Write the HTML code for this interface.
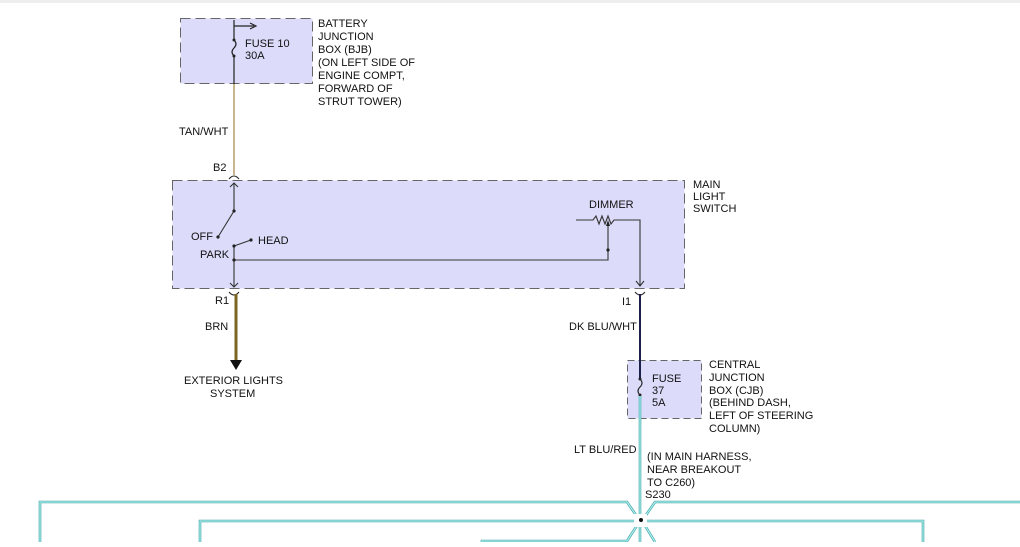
<!DOCTYPE html>
<html><head><meta charset="utf-8"><style>
body{margin:0;background:#fff;}
svg text{font-family:"Liberation Sans",sans-serif;font-size:11px;fill:#111;}
</style></head><body>
<svg width="1020" height="542" viewBox="0 0 1020 542" xmlns="http://www.w3.org/2000/svg">
<rect x="0" y="0" width="1020" height="3" fill="#eee"/>
<rect x="180.5" y="18.5" width="132" height="65" fill="#dcdcfa" stroke="#666" stroke-dasharray="10,5"/>
<rect x="172.5" y="180.5" width="512" height="108" fill="#dcdcfa" stroke="#666" stroke-dasharray="10,5"/>
<rect x="627.5" y="360.5" width="74" height="58" fill="#dcdcfa" stroke="#666" stroke-dasharray="7,4"/>

<g stroke="#222" fill="none" stroke-width="1.2">
<path d="M234 20 V40"/><path d="M234 26 H254"/><path d="M250 23 L256 26 L250 29"/>
<path d="M234 40 q4 4 0 8 q-4 4 0 8"/>
<path d="M234 56 V84"/>
</g>
<circle cx="234" cy="40" r="1.5" fill="#222"/><circle cx="234" cy="56" r="1.5" fill="#222"/>
<path d="M234 84 V175" stroke="#c9b58e" stroke-width="2" fill="none"/>
<path d="M229 179 q5 -6 10 0" stroke="#222" fill="none"/>
<g stroke="#333" fill="none" stroke-width="1.1">
<path d="M230 187 L234 183 L238 187"/><path d="M234 183 V211"/>
<path d="M234 211 L218 237"/>
<path d="M234 260 V246 L251 240"/>
<path d="M234 260 H608 V226"/>
<path d="M234 260 V287"/><path d="M230 283 L234 287 L238 283"/>
<path d="M576 220 H593 l3 -4 l3 8 l3 -8 l3 8 l3 -8 l3 8 l3 -4 H640 V285"/>
<path d="M636 281 L640 286 L644 281"/>
</g>
<path d="M608 220 L606 226 L610 226 Z" fill="#222"/>
<circle cx="234" cy="211" r="1.6" fill="#222"/><circle cx="218" cy="237" r="1.6" fill="#222"/>
<circle cx="251" cy="240" r="1.6" fill="#222"/><circle cx="234" cy="246" r="1.6" fill="#222"/>
<circle cx="234" cy="260" r="1.6" fill="#222"/><circle cx="608" cy="250" r="1.6" fill="#222"/>
<path d="M229 292 q5 6 10 0" stroke="#222" fill="none"/>
<path d="M236 294 V362" stroke="#7a6620" stroke-width="3" fill="none"/>
<path d="M230 360 L242 360 L236 370 Z" fill="#111"/>
<path d="M635 292 q5 6 10 0" stroke="#222" fill="none"/>
<path d="M640 294 V379" stroke="#1c1f4a" stroke-width="2" fill="none"/>
<g stroke="#222" fill="none" stroke-width="1.1"><path d="M640 379 q4 4 0 8 q-4 4 0 8"/></g>
<circle cx="640" cy="379" r="1.5" fill="#222"/><circle cx="640" cy="395" r="1.5" fill="#222"/>
<g stroke="#4aa8a8" stroke-width="2.6" fill="none"><path d="M640 396 V542"/>
<path d="M40 542 V502 H627 L638 518"/><path d="M1020 502 H655 L644 518"/>
<path d="M200 542 V521 H923 V542"/><path d="M482 542 V541 H627 L638 524"/><path d="M644 524 L655 542"/></g>
<g stroke="#a8eeee" stroke-width="1.2" fill="none"><path d="M640 396 V542"/>
<path d="M40 542 V502 H627 L638 518"/><path d="M1020 502 H655 L644 518"/>
<path d="M200 542 V521 H923 V542"/><path d="M482 542 V541 H627 L638 524"/><path d="M644 524 L655 542"/></g>
<rect x="634" y="514" width="13" height="13" fill="#fff"/>
<circle cx="641" cy="520" r="2" fill="#111"/>

<text x="245" y="47">FUSE 10</text><text x="245" y="59">30A</text>
<text x="318" y="27">BATTERY</text><text x="318" y="40">JUNCTION</text><text x="318" y="53">BOX (BJB)</text>
<text x="318" y="66">(ON LEFT SIDE OF</text><text x="318" y="79">ENGINE COMPT,</text><text x="318" y="92">FORWARD OF</text><text x="318" y="105">STRUT TOWER)</text>
<text x="179" y="135">TAN/WHT</text>
<text x="213" y="171">B2</text>
<text x="693" y="188">MAIN</text><text x="693" y="200">LIGHT</text><text x="693" y="212">SWITCH</text>
<text x="589" y="208">DIMMER</text>
<text x="191" y="240">OFF</text><text x="258" y="244">HEAD</text><text x="200" y="258">PARK</text>
<text x="215" y="304">R1</text>
<text x="205" y="330">BRN</text>
<text x="184" y="384">EXTERIOR LIGHTS</text><text x="210" y="397">SYSTEM</text>
<text x="622" y="305">I1</text>
<text x="569" y="330">DK BLU/WHT</text>
<text x="652" y="382">FUSE</text><text x="652" y="394">37</text><text x="652" y="406">5A</text>
<text x="709" y="368">CENTRAL</text><text x="709" y="381">JUNCTION</text><text x="709" y="394">BOX (CJB)</text>
<text x="709" y="406">(BEHIND DASH,</text><text x="709" y="419">LEFT OF STEERING</text><text x="709" y="432">COLUMN)</text>
<text x="574" y="453">LT BLU/RED</text>
<text x="647" y="460">(IN MAIN HARNESS,</text><text x="647" y="473">NEAR BREAKOUT</text><text x="647" y="486">TO C260)</text>
<text x="645" y="498">S230</text>
</svg>
</body></html>
